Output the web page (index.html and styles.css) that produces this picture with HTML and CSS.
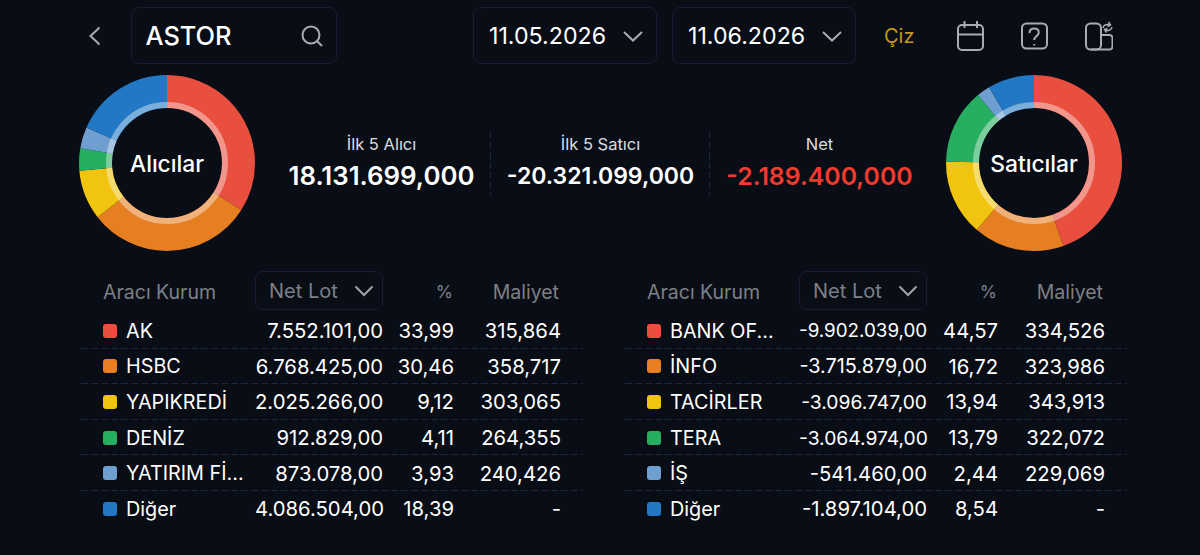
FILE: index.html
```html
<!DOCTYPE html>
<html lang="tr">
    <head>
        <title>ASTOR</title>
        <link rel="stylesheet" href="styles.css">
    </head>
    <body>
        <div class="topbar">
            <svg class="back" width="16" height="24" viewBox="0 0 16 24"><path d="M12.500 3.500 3.500 12l9 8.500"/></svg>
            <div class="box search">
                <span>ASTOR</span>
                <svg width="22" height="22" viewBox="0 0 22 22"><circle cx="10" cy="10" r="8.500"/><path d="m16 16 5 5"/></svg>
            </div>
            <div class="box date">
                <span>11.05.2026</span>
                <svg width="22" height="12" viewBox="0 0 22 12"><path d="m2 2 9 8.500 9-8.500"/></svg>
            </div>
            <div class="box date">
                <span>11.06.2026</span>
                <svg width="22" height="12" viewBox="0 0 22 12"><path d="m2 2 9 8.500 9-8.500"/></svg>
            </div>
            <div class="ciz">Çiz</div>
            <div class="tools">
                <svg width="30" height="32" viewBox="0 0 30 32"><rect x="3" y="5" width="25" height="25" rx="4"/><path d="M3 14.500h25M9.500 1v7M22 1v7"/></svg>
                <svg width="30" height="30" viewBox="0 0 30 30"><rect x="3" y="2.500" width="25" height="25" rx="4.500"/><path d="M10.500 12c0-3 2-4.500 4.700-4.500s4.600 1.600 4.600 4c0 3.500-4.600 3.500-4.600 7.500M15.200 23v1.500"/></svg>
                <svg width="30" height="30" viewBox="0 0 30 30"><rect x="3" y="2.500" width="15" height="26" rx="4.500"/><path d="M18 14h8.500a3 3 0 0 1 3 3v8.500a3 3 0 0 1-3 3H8"/><path class="thin" d="M20 7c.5-3 4-4.500 7-3M29 6c-.5 3-4 4.500-7 3M25.500 1l2 3-3 1.500M23.500 11.500l-2-3 3-1"/></svg>
            </div>
        </div>

        <div class="summary">
            <div class="donut">
                <svg width="176" height="176" viewBox="0 0 176 176">
                    <g class="ring">
                        <circle pathLength="100" stroke="#e94f3f" stroke-dasharray="33.99 100" stroke-dashoffset="0" cx="88" cy="88" r="71.500"/>
                        <circle pathLength="100" stroke="#e67e22" stroke-dasharray="30.46 100" stroke-dashoffset="-33.99" cx="88" cy="88" r="71.500"/>
                        <circle pathLength="100" stroke="#f1c40f" stroke-dasharray="9.12 100" stroke-dashoffset="-64.45" cx="88" cy="88" r="71.500"/>
                        <circle pathLength="100" stroke="#27ae60" stroke-dasharray="4.11 100" stroke-dashoffset="-73.57" cx="88" cy="88" r="71.500"/>
                        <circle pathLength="100" stroke="#6f9fd0" stroke-dasharray="3.93 100" stroke-dashoffset="-77.68" cx="88" cy="88" r="71.500"/>
                        <circle pathLength="100" stroke="#2278c4" stroke-dasharray="18.39 100" stroke-dashoffset="-81.61" cx="88" cy="88" r="71.500"/>
                    </g>
                    <circle class="glow" cx="88" cy="88" r="58"/>
                </svg>
                <span class="donut-label">Alıcılar</span>
            </div>
            <div class="stats">
                <div class="stat">
                    <div class="stat-title">İlk 5 Alıcı</div>
                    <div class="stat-value fit-buy">18.131.699,000</div>
                </div>
                <div class="stat">
                    <div class="stat-title">İlk 5 Satıcı</div>
                    <div class="stat-value fit-sell">-20.321.099,000</div>
                </div>
                <div class="stat">
                    <div class="stat-title">Net</div>
                    <div class="stat-value fit-net negative">-2.189.400,000</div>
                </div>
            </div>
            <div class="donut">
                <svg width="176" height="176" viewBox="0 0 176 176">
                    <g class="ring">
                        <circle pathLength="100" stroke="#e94f3f" stroke-dasharray="44.57 100" stroke-dashoffset="0" cx="88" cy="88" r="71.500"/>
                        <circle pathLength="100" stroke="#e67e22" stroke-dasharray="16.72 100" stroke-dashoffset="-44.57" cx="88" cy="88" r="71.500"/>
                        <circle pathLength="100" stroke="#f1c40f" stroke-dasharray="13.94 100" stroke-dashoffset="-61.29" cx="88" cy="88" r="71.500"/>
                        <circle pathLength="100" stroke="#27ae60" stroke-dasharray="13.79 100" stroke-dashoffset="-75.23" cx="88" cy="88" r="71.500"/>
                        <circle pathLength="100" stroke="#6f9fd0" stroke-dasharray="2.44 100" stroke-dashoffset="-89.02" cx="88" cy="88" r="71.500"/>
                        <circle pathLength="100" stroke="#2278c4" stroke-dasharray="8.54 100" stroke-dashoffset="-91.46" cx="88" cy="88" r="71.500"/>
                    </g>
                    <circle class="glow" cx="88" cy="88" r="58"/>
                </svg>
                <span class="donut-label">Satıcılar</span>
            </div>
        </div>

        <div class="tables">
            <div class="table">
                <div class="row head">
                    <div class="name">Aracı Kurum</div>
                    <div class="box sort">Net Lot <svg width="20" height="12" viewBox="0 0 20 12"><path d="m1.500 1.500 8.500 8.500 8.500-8.500"/></svg></div>
                    <div class="num percent">%</div>
                    <div class="num">Maliyet</div>
                </div>
                <div class="row"><div class="name"><i class="red"></i>AK</div><div class="num">7.552.101,00</div><div class="num">33,99</div><div class="num">315,864</div></div>
                <div class="row"><div class="name"><i class="orange"></i>HSBC</div><div class="num">6.768.425,00</div><div class="num">30,46</div><div class="num">358,717</div></div>
                <div class="row"><div class="name"><i class="yellow"></i>YAPIKREDİ</div><div class="num">2.025.266,00</div><div class="num">9,12</div><div class="num">303,065</div></div>
                <div class="row"><div class="name"><i class="green"></i>DENİZ</div><div class="num">912.829,00</div><div class="num">4,11</div><div class="num">264,355</div></div>
                <div class="row"><div class="name"><i class="steel"></i>YATIRIM Fİ...</div><div class="num">873.078,00</div><div class="num">3,93</div><div class="num">240,426</div></div>
                <div class="row"><div class="name"><i class="blue"></i>Diğer</div><div class="num">4.086.504,00</div><div class="num">18,39</div><div class="num">-</div></div>
            </div>
            <div class="table">
                <div class="row head">
                    <div class="name">Aracı Kurum</div>
                    <div class="box sort">Net Lot <svg width="20" height="12" viewBox="0 0 20 12"><path d="m1.500 1.500 8.500 8.500 8.500-8.500"/></svg></div>
                    <div class="num percent">%</div>
                    <div class="num">Maliyet</div>
                </div>
                <div class="row"><div class="name"><i class="red"></i>BANK OF...</div><div class="num fit-s">-9.902.039,00</div><div class="num">44,57</div><div class="num">334,526</div></div>
                <div class="row"><div class="name"><i class="orange"></i>İNFO</div><div class="num fit-l">-3.715.879,00</div><div class="num">16,72</div><div class="num">323,986</div></div>
                <div class="row"><div class="name"><i class="yellow"></i>TACİRLER</div><div class="num fit-m">-3.096.747,00</div><div class="num">13,94</div><div class="num">343,913</div></div>
                <div class="row"><div class="name"><i class="green"></i>TERA</div><div class="num fit-m">-3.064.974,00</div><div class="num">13,79</div><div class="num">322,072</div></div>
                <div class="row"><div class="name"><i class="steel"></i>İŞ</div><div class="num">-541.460,00</div><div class="num">2,44</div><div class="num">229,069</div></div>
                <div class="row"><div class="name"><i class="blue"></i>Diğer</div><div class="num">-1.897.104,00</div><div class="num">8,54</div><div class="num">-</div></div>
            </div>
        </div>
    </body>
</html>
```

FILE: styles.css
```css
html, body {
    height: 100%;
}
body {
    margin: 0;
    overflow: hidden;
    background: #090d15;
    color: #fff;
    font-family: Inter, "Liberation Sans", sans-serif;
}
svg {
    display: block;
    flex: none;
    fill: none;
}
.box {
    display: flex;
    align-items: center;
    box-sizing: border-box;
    border: 1.500px solid #191d33;
    border-radius: 8px;
}

/* top bar */
.topbar {
    display: flex;
    align-items: center;
    height: 57px;
    padding: 7px 0 0 87px;
}
.topbar svg path, .topbar svg rect, .topbar svg circle {
    stroke-width: 2;
    stroke: #a9acb2;
}
.topbar svg .thin {
    stroke-width: 1.500;
}
.back {
    margin-right: 28px;
}
.search {
    justify-content: space-between;
    width: 206px;
    height: 57px;
    padding: 0 13px 0 13.500px;
    font-size: 25.400px;
    font-weight: 500;
    margin-right: 136px;
}
.date {
    justify-content: space-between;
    width: 184px;
    height: 57px;
    padding: 0 12px 0 15px;
    font-size: 23.200px;
    margin-right: 15px;
}
.ciz {
    margin-left: 13px;
    width: 71px;
    color: #c49a1d;
    font-size: 20px;
}
.tools {
    display: flex;
    align-items: center;
    gap: 34px;
}

/* donuts and totals */
.summary {
    display: flex;
    align-items: center;
    margin-top: 11px;
    padding-left: 79px;
}
.donut {
    position: relative;
    width: 176px;
    height: 176px;
}
.ring circle {
    fill: none;
    stroke-width: 33;
    transform: rotate(-90deg);
    transform-origin: 88px 88px;
}
.glow {
    stroke: rgba(255, 255, 255, 0.4);
    stroke-width: 6;
}
.donut-label {
    position: absolute;
    inset: 0;
    display: flex;
    align-items: center;
    justify-content: center;
    font-size: 22.800px;
    font-weight: 500;
}
.stats {
    display: flex;
    margin: 0 17px;
}
.stat {
    width: 219px;
    padding: 2px 0 4px;
    text-align: center;
    box-sizing: border-box;
    background: repeating-linear-gradient(180deg, #20253f 0 7px, transparent 7px 10px) right / 1px 100% no-repeat;
}
.stat:last-child {
    background: none;
}
.stat-title {
    font-size: 16.500px;
    color: #dcdde0;
    line-height: 20px;
}
.stat-value {
    margin-top: 7px;
    font-weight: 600;
    line-height: 30px;
}
.fit-buy {
    font-size: 25.800px;
}
.fit-sell {
    font-size: 23px;
}
.fit-net {
    font-size: 24.800px;
}
.negative {
    color: #f4392f;
}

/* tables */
.tables {
    display: flex;
    gap: 42px;
    margin-top: 20px;
    padding-left: 81px;
}
.table {
    width: 502px;
}
.row {
    display: grid;
    grid-template-columns: 152px 128px 71px 107px;
    align-items: center;
    height: 35.600px;
    padding: 0 22px;
    box-sizing: border-box;
    font-size: 20.300px;
    background: repeating-linear-gradient(90deg, #20253f 0 7px, transparent 7px 10px) bottom / 100% 1px no-repeat;
}
.row:last-child {
    background: none;
}
.row .fit-l {
    font-size: 19.850px;
}
.row .fit-m {
    font-size: 19.250px;
}
.row .fit-s {
    font-size: 18.800px;
}
.head {
    height: 39px;
    margin-bottom: 3px;
    background: none;
    color: #7d8087;
    font-size: 19.500px;
}
.head .num {
    padding: 2px 2px 0 0;
}
.head .percent {
    padding-right: 1px;
    font-size: 17.500px;
}
.head .name {
    padding-top: 2px;
    font-size: 19.500px;
}
.name {
    display: flex;
    align-items: center;
    font-size: 19.800px;
}
.name i {
    width: 14px;
    height: 14px;
    margin-right: 9px;
    border-radius: 3px;
}
.num {
    text-align: right;
}
.sort {
    justify-content: space-between;
    height: 39px;
    padding: 0 8px 0 13px;
    font-size: 20px;
}
.sort svg path {
    stroke: #a0a3a9;
    stroke-width: 2;
}
.red { background: #e94f3f; }
.orange { background: #e67e22; }
.yellow { background: #f1c40f; }
.green { background: #27ae60; }
.steel { background: #6f9fd0; }
.blue { background: #2278c4; }
```
